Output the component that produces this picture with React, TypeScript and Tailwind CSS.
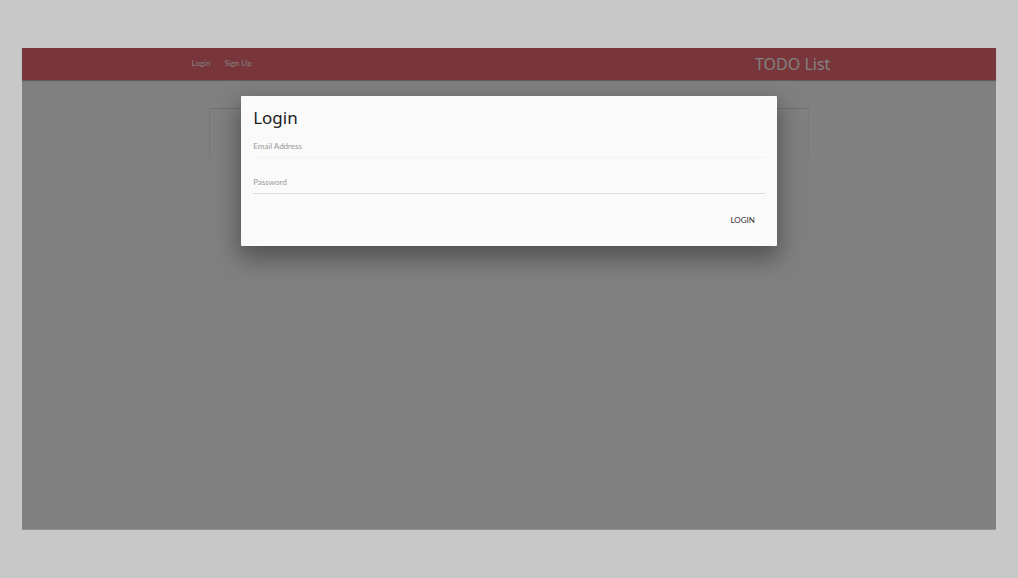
function Navbar() {
  return (
    <nav className="bg-[#78363a] shadow-[0_1px_1px_rgba(0,0,0,0.25)]">
      <div className="mx-auto flex h-8 w-[66%] items-center justify-between pl-1 text-[#828282]">
        <ul className="flex gap-[14px] pb-0.5 text-[8px] leading-4">
          <li>
            <a href="#login">Login</a>
          </li>
          <li>
            <a href="#signup">Sign Up</a>
          </li>
        </ul>
        <a href="#home" className="font-['Noto_Sans',sans-serif] text-base leading-6">
          TODO List
        </a>
      </div>
    </nav>
  );
}

interface FieldProps {
  id: string;
  type: string;
  label: string;
  lineClass: string;
}

function Field({ id, type, label, lineClass }: FieldProps) {
  return (
    <div className="relative">
      <input
        id={id}
        type={type}
        className={`block h-5 w-full border-b bg-transparent text-[8px] outline-none ${lineClass}`}
      />
      <label htmlFor={id} className="absolute top-0 left-0 text-[8px] leading-4 text-[#999]">
        {label}
      </label>
    </div>
  );
}

function LoginDialog() {
  return (
    <div
      role="dialog"
      aria-labelledby="login-title"
      className="absolute inset-x-0 top-12 mx-auto w-[55%] rounded-[1px] bg-[#fafafa] px-3 pt-3 pb-4 shadow-[0_10px_24px_2px_rgba(0,0,0,0.38)]"
    >
      <h1
        id="login-title"
        className="font-['Noto_Sans',sans-serif] text-[17px] leading-5 text-[#212121]"
      >
        Login
      </h1>
      <form onSubmit={(event) => event.preventDefault()}>
        <div className="mt-[10px] flex flex-col gap-4">
          <Field id="email" type="email" label="Email Address" lineClass="border-[#f3f3f3]" />
          <Field id="password" type="password" label="Password" lineClass="border-[#dcdcdc]" />
        </div>
        <div className="mt-4 flex justify-end">
          <button type="submit" className="h-5 px-[10px] text-[8px] leading-4 text-[#343434]">
            LOGIN
          </button>
        </div>
      </form>
    </div>
  );
}

export default function App() {
  return (
    <div className="flex min-h-screen flex-col bg-[#c8c8c8] px-[22px] py-12 font-['Lato','Noto_Sans',sans-serif]">
      <main className="relative flex-1 border-b border-[#929090] bg-[#808080]">
        <Navbar />
        <div className="mx-auto mt-7 h-[50px] w-[600px] max-w-full border border-t-[#707070] border-r-[#7a7a7a] border-b-[#7f7f7f] border-l-[#757575]" />
        <LoginDialog />
      </main>
    </div>
  );
}
